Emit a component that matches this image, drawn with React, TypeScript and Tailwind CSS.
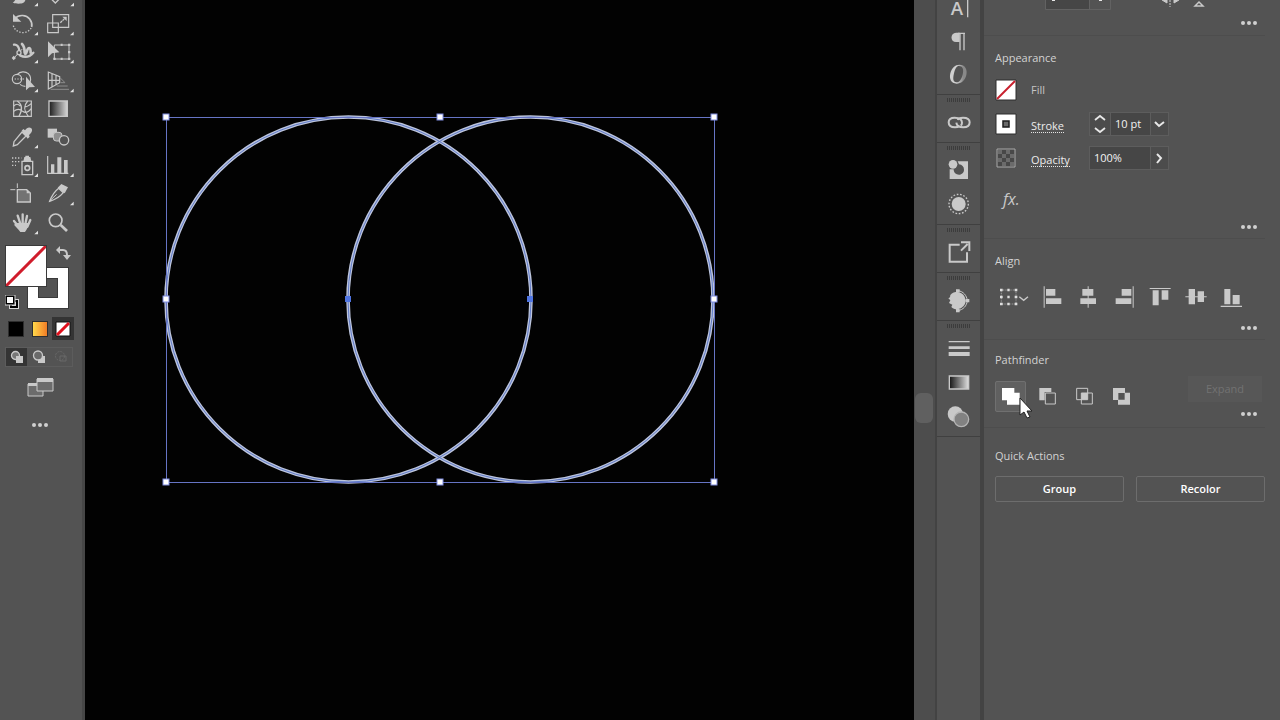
import type { ReactNode } from 'react';

type Icon = { label: string; box: string; art: ReactNode };

const INK = '#c9c9c9';

/* The small triangle that marks a tool with hidden variants */
function Corner({ x, y }: { x: number; y: number }) {
  return <path d={`M${x} ${y - 11}v11h-11z`} fill="#e2e2e2" />;
}

const tools: Icon[] = [
  {
    label: 'Paintbrush',
    box: '12 -56 108 84',
    art: (
      <>
        <path d="M38 8C46 6 44-4 56-6l14-8 6 14c0 8-8 12-20 12-8 0-14 0-18-4z" fill={INK} />
        <Corner x={114} y={20} />
      </>
    ),
  },
  {
    label: 'Eraser',
    box: '120 -56 108 84',
    art: (
      <>
        <path d="M150-6l16 16 17-17-15-15z" fill="none" stroke={INK} strokeWidth="4" />
        <Corner x={222} y={20} />
      </>
    ),
  },
  {
    label: 'Rotate',
    box: '12 29 108 84',
    art: (
      <>
        <path d="M45 54c12-12 34-11 44 2 6 8 8 16 6 24" fill="none" stroke={INK} strokeWidth="5" />
        <path d="M39 41v23h25z" fill={INK} />
        <path d="M40 76c3 12 14 20 28 21 12 0 22-7 26-15" fill="none" stroke={INK} strokeWidth="4" strokeDasharray="4 5" />
        <Corner x={114} y={105} />
      </>
    ),
  },
  {
    label: 'Scale',
    box: '120 29 108 84',
    art: (
      <>
        <g fill="none" stroke={INK} strokeWidth="3.5">
          <path d="M158 43h48v38h-48z" />
          <path d="M143 68h32v29h-32z" />
          <path d="M181 67l15-14" strokeWidth="4" strokeDasharray="7 2" />
        </g>
        <path d="M187 49h13v13z" fill={INK} />
        <Corner x={221} y={105} />
      </>
    ),
  },
  {
    label: 'Width',
    box: '12 114 108 84',
    art: (
      <>
        <g fill="none" stroke={INK} strokeLinecap="round">
          <path d="M42 134c8-2 14 6 16 16" strokeWidth="7" />
          <path d="M66 132c6 6 8 14 8 26" strokeWidth="8" />
          <path d="M76 162c6-4 4-18 12-18 4 0 4 6 4 14" strokeWidth="8" />
          <path d="M40 176L66 148" strokeWidth="3" />
          <path d="M60 166c12 6 28 6 40-8" strokeWidth="7" />
          <circle cx="57" cy="158" r="6" strokeWidth="4" fill="#535353" />
        </g>
        <path d="M41 167l7 7-7 7-6-7z" fill={INK} />
        <Corner x={114} y={190} />
      </>
    ),
  },
  {
    label: 'Free Transform',
    box: '120 114 108 84',
    art: (
      <>
        <path d="M163 135h44v42h-44z" fill="none" stroke={INK} strokeWidth="3" />
        <path d="M204 131h7v7h-7zM204 153h7v7h-7zM204 173h7v7h-7zM182 173h6v7h-6zM160 173h7v7h-7zM182 131h6v7h-6z" fill={INK} />
        <path d="M144 124v48l12-12 22-3z" fill={INK} />
        <Corner x={221} y={190} />
      </>
    ),
  },
  {
    label: 'Shape Builder',
    box: '12 200 108 84',
    art: (
      <>
        <g fill="none" stroke={INK} strokeWidth="3.5">
          <circle cx="51" cy="236" r="14" />
          <path d="M52 222c8-9 24-10 33-2 7 7 8 17 5 25M60 252c5 4 11 6 16 6" />
          <path d="M44 236h28" strokeDasharray="4 4" />
        </g>
        <path d="M78 229v41l10-9 17-1z" fill={INK} />
        <Corner x={114} y={276} />
      </>
    ),
  },
  {
    label: 'Perspective Grid',
    box: '120 200 108 84',
    art: (
      <>
        <path d="M145 215v51l34-19v-18zM156 221v40M168 226v28M145 240h34" fill="none" stroke={INK} strokeWidth="3.5" />
        <path d="M180 232l14 14M182 247h13M170 257h33M152 267h55" stroke="#8d8d8d" strokeWidth="3" />
        <Corner x={221} y={276} />
      </>
    ),
  },
  {
    label: 'Mesh',
    box: '12 285 108 84',
    art: (
      <g fill="none" stroke={INK} strokeWidth="3.5">
        <path d="M41 303h53v46H41z" />
        <path d="M52 303c18 12 14 30 5 46M83 303c-14 16-12 30 2 46M41 334c10-8 18-8 27 0 8 6 18 2 26-8M41 318c8-8 14-6 20 0M73 321c8 0 14-4 21-10" />
      </g>
    ),
  },
  {
    label: 'Gradient',
    box: '120 285 108 84',
    art: (
      <>
        <linearGradient id="tool-gradient">
          <stop stopColor="#1c1c1c" />
          <stop offset="1" stopColor="#d6d6d6" />
        </linearGradient>
        <path d="M147 303h55v46h-55z" fill="url(#tool-gradient)" stroke={INK} strokeWidth="4" />
      </>
    ),
  },
  {
    label: 'Eyedropper',
    box: '12 10 108 84',
    art: (
      <>
        <path d="M66 37l12 12-26 26-12 4 2-13z" fill="none" stroke={INK} strokeWidth="4" />
        <path d="M65 33l5-5 5 4c5-8 13-11 19-6 5 6 1 14-7 20l2 5-6 6z" fill={INK} />
        <Corner x={114} y={86} />
      </>
    ),
  },
  {
    label: 'Blend',
    box: '120 10 108 84',
    art: (
      <>
        <path d="M143 27h28v27h-28z" fill={INK} />
        <rect x="160" y="38" width="26" height="26" rx="9" fill="#8f8f8f" stroke={INK} strokeWidth="3" />
        <circle cx="192" cy="62" r="14" fill="#535353" stroke={INK} strokeWidth="4" />
      </>
    ),
  },
  {
    label: 'Symbol Sprayer',
    box: '12 96 108 84',
    art: (
      <>
        <path d="M66 124h32v40H66z" fill="none" stroke={INK} strokeWidth="4" />
        <path d="M70 124l3-13h18l3 13zM76 107h11v5H76z" fill={INK} />
        <circle cx="82" cy="144" r="7" fill="none" stroke={INK} strokeWidth="5" />
        <path d="M36 114h28M36 125h22M36 136h12" stroke={INK} strokeWidth="4" strokeDasharray="4 5" />
        <Corner x={114} y={171} />
      </>
    ),
  },
  {
    label: 'Column Graph',
    box: '120 96 108 84',
    art: (
      <>
        <path d="M143 108v52h62" fill="none" stroke={INK} strokeWidth="3.5" />
        <path d="M153 133h10v27h-10zM172 112h12v48h-12zM192 120h11v40h-11z" fill={INK} />
        <Corner x={221} y={171} />
      </>
    ),
  },
  {
    label: 'Artboard',
    box: '12 181 108 84',
    art: (
      <>
        <path d="M52 210h28l11 10v27H52z" fill="#737373" stroke={INK} strokeWidth="4" />
        <path d="M80 210v11h11" fill={INK} />
        <path d="M31 210h15M52 191v14" stroke={INK} strokeWidth="3" />
      </>
    ),
  },
  {
    label: 'Slice',
    box: '120 181 108 84',
    art: (
      <>
        <path d="M176 206l14 13c-10 12-24 21-41 26 6-16 14-29 27-39z" fill="none" stroke={INK} strokeWidth="4" />
        <path d="M173 204l11-11 20 10-10 18z" fill={INK} />
        <path d="M148 245l22-21" stroke={INK} strokeWidth="3" />
        <Corner x={221} y={257} />
      </>
    ),
  },
  {
    label: 'Hand',
    box: '12 266 108 84',
    art: (
      <>
        <g stroke={INK} strokeWidth="7" strokeLinecap="round" fill="none">
          <path d="M42 302l14 17M53 286l8 24M68 282v26M81 287l-5 24M91 299l-9 20" />
        </g>
        <path d="M50 308h37c-2 10-5 18-12 27H61c-6-9-13-15-19-22z" fill={INK} />
        <Corner x={114} y={342} />
      </>
    ),
  },
  {
    label: 'Zoom',
    box: '120 266 108 84',
    art: (
      <>
        <circle cx="167" cy="300" r="19" fill="none" stroke={INK} strokeWidth="5" />
        <path d="M182 314l19 18" stroke={INK} strokeWidth="8" />
      </>
    ),
  },
];

const dock: Icon[][] = [
  [
    {
      label: 'Character',
      box: '97 -33 126 102',
      art: (
        <>
          <text x="138" y="44" fontSize="56" fontWeight="600" fill={INK} fontFamily="Open Sans, sans-serif">A</text>
          <path d="M189 0v52" stroke={INK} strokeWidth="4" />
        </>
      ),
    },
    {
      label: 'Paragraph',
      box: '97 69 126 102',
      art: (
        <>
          <path d="M165 98v28h-11c-18 0-18-28 0-28z" fill={INK} />
          <path d="M160 100h21M166 98v53M178 98v53" stroke={INK} strokeWidth="4" fill="none" />
        </>
      ),
    },
    {
      label: 'OpenType',
      box: '97 171 126 102',
      art: (
        <>
          <linearGradient id="opentype">
            <stop offset=".4" stopColor="#d0d0d0" />
            <stop offset=".8" stopColor="#898989" />
          </linearGradient>
          <path
            d="M164 194c18 0 25 15 21 31-4 17-16 26-29 26-17 0-23-15-19-31 4-17 15-26 27-26zm-1 4c-7 0-12 8-15 22-4 16-3 27 7 27 9 0 15-8 19-23 4-16 0-26-11-26z"
            fill="url(#opentype)"
          />
        </>
      ),
    },
  ],
  [
    {
      label: 'Links',
      box: '97 315 126 102',
      art: (
        <g fill="none" stroke={INK} strokeWidth="6">
          <path d="M164 378c-3 3-8 4-13 4-11 0-19-5-19-15s8-14 18-14c11 0 22 4 22 15 0 4-1 7-4 9" />
          <path d="M159 360c2-5 8-7 16-7 12 0 20 5 20 14 0 10-8 15-19 15-10 0-20-4-21-14" />
        </g>
      ),
    },
  ],
  [
    {
      label: 'Color Guide',
      box: '97 41 126 102',
      art: (
        <>
          <path d="M159 66h31v53h-55V90h12c0 10 7 16 16 16 9 0 15-7 15-15 0-9-6-15-15-16z" fill={INK} />
          <circle cx="145" cy="75" r="13" fill={INK} />
        </>
      ),
    },
    {
      label: 'Appearance',
      box: '97 142 126 102',
      art: (
        <>
          <circle cx="162" cy="193" r="21" fill={INK} />
          <circle cx="162" cy="193" r="29" fill="none" stroke={INK} strokeWidth="4" strokeDasharray="5 5" />
        </>
      ),
    },
  ],
  [
    {
      label: 'Asset Export',
      box: '97 286 126 102',
      art: (
        <>
          <path d="M165 315h-30v51h52v-28" fill="none" stroke={INK} strokeWidth="6" />
          <path d="M169 333l20-20M169 308h25v26" fill="none" stroke={INK} strokeWidth="6" />
        </>
      ),
    },
  ],
  [
    {
      label: 'Color Themes',
      box: '97 12 126 102',
      art: (
        <>
          <path d="M137 48c7-8 18-11 28-9 13 3 20 14 20 26 0 14-10 25-23 26-9 1-17-1-22-7l3-7-10-5 4-8-6-6 5-3z" fill={INK} />
          <path d="M160 35c16 2 26 14 28 30-2 16-12 27-28 30" fill="none" stroke="#535353" strokeWidth="9" />
          <path d="M160 35c16 2 26 14 28 30-2 16-12 27-28 30" fill="none" stroke={INK} strokeWidth="3" />
          <path d="M154 31h11v10h-11zM183 60h11v10h-11zM154 90h11v10h-11z" fill={INK} />
        </>
      ),
    },
  ],
  [
    {
      label: 'Stroke panel',
      box: '97 155 126 102',
      art: <path d="M132 185h63v4h-63zM132 201h63v8h-63zM132 218h63v12h-63z" fill={INK} />,
    },
    {
      label: 'Gradient panel',
      box: '97 255 126 102',
      art: (
        <>
          <linearGradient id="dock-gradient">
            <stop stopColor="#141414" />
            <stop offset="1" stopColor="#e0e0e0" />
          </linearGradient>
          <path d="M134 288h58v39h-58z" fill="url(#dock-gradient)" stroke={INK} strokeWidth="4" />
        </>
      ),
    },
    {
      label: 'Transparency',
      box: '97 357 126 102',
      art: (
        <>
          <circle cx="152" cy="402" r="23" fill={INK} />
          <circle cx="170" cy="418" r="22" fill="#828282" stroke="#b5b5b5" strokeWidth="4" />
        </>
      ),
    },
  ],
];

const alignments: Icon[] = [
  {
    label: 'Horizontal Align Left',
    box: '164 117 108 108',
    art: <path d="M193 139h3v64h-3zM200 147h28v20h-28zM200 175h46v17h-46z" fill={INK} />,
  },
  {
    label: 'Horizontal Align Center',
    box: '272 117 108 108',
    art: <path d="M325 139h3v64h-3zM309 147h33v20h-33zM303 175h47v17h-47z" fill={INK} />,
  },
  {
    label: 'Horizontal Align Right',
    box: '380 117 108 108',
    art: <path d="M460 139h3v64h-3zM427 147h29v20h-29zM409 175h47v17h-47z" fill={INK} />,
  },
  {
    label: 'Vertical Align Top',
    box: '487 117 108 108',
    art: <path d="M510 144h63v3h-63zM519 151h18v45h-18zM546 151h20v28h-20z" fill={INK} />,
  },
  {
    label: 'Vertical Align Center',
    box: '594 117 108 108',
    art: <path d="M616 169h64v3h-64zM626 147h19v46h-19zM653 154h19v32h-19z" fill={INK} />,
  },
  {
    label: 'Vertical Align Bottom',
    box: '702 117 108 108',
    art: <path d="M722 197h64v4h-64zM733 147h18v46h-18zM758 165h21v28h-21z" fill={INK} />,
  },
];

const pathfinders: Icon[] = [
  {
    label: 'Unite',
    box: '46 124 93 93',
    art: <path d="M67 145h37v14h16v36H82v-13H67z" fill="#ffffff" />,
  },
  {
    label: 'Minus Front',
    box: '156 124 93 93',
    art: (
      <>
        <path d="M178 145h36v12h-20v25h-16z" fill={INK} />
        <path d="M196 160h30v33h-30z" fill="none" stroke={INK} strokeWidth="3" />
      </>
    ),
  },
  {
    label: 'Intersect',
    box: '267 124 93 93',
    art: (
      <>
        <path d="M290 146h33v34h-33zM304 160h33v33h-33z" fill="none" stroke={INK} strokeWidth="3" />
        <path d="M304 160h19v20h-19z" fill={INK} />
      </>
    ),
  },
  {
    label: 'Exclude',
    box: '378 124 93 93',
    art: <path fillRule="evenodd" d="M399 145h36v14h15v36h-36v-14h-15zM415 160v20h19v-20z" fill={INK} />,
  },
];

function More() {
  return (
    <button aria-label="More options" className="mr-2 flex h-2 w-4 items-center justify-between">
      <Dots />
    </button>
  );
}

function Dots() {
  return (
    <svg viewBox="0 0 16 8" className="h-2 w-4" fill="#d0d0d0">
      <circle cx="2" cy="4" r="2" />
      <circle cx="8" cy="4" r="2" />
      <circle cx="14" cy="4" r="2" />
    </svg>
  );
}

function Toolbar() {
  return (
    <aside className="flex w-[85px] shrink-0 flex-col border-r-3 border-[#474747]">
      <div className="-mt-[19px] ml-1 grid h-[256px] w-[72px] shrink-0 grid-cols-2">
        {tools.map((tool) => (
          <button key={tool.label} aria-label={tool.label} className="flex items-center justify-center">
            <svg viewBox={tool.box} className="h-7 w-9">
              {tool.art}
            </svg>
          </button>
        ))}
      </div>

      {/* Fill and stroke proxies overlap each other */}
      <div className="relative mt-2 ml-[5px] h-16 w-16">
        <button aria-label="Stroke color" className="absolute right-0 bottom-0 size-[42px] border border-[#3a3a3a] bg-white p-[10px]">
          <span className="block size-5 border border-[#3a3a3a] bg-[#535353]" />
        </button>
        <button aria-label="Fill color" className="absolute top-0 left-0 size-[42px] border border-[#3a3a3a] bg-white">
          <svg viewBox="0 0 40 40" className="size-10">
            <path d="M0 40L40 0" stroke="#d01c2b" strokeWidth="3" />
          </svg>
        </button>
        <button aria-label="Swap fill and stroke" className="absolute top-0 right-0">
          <svg viewBox="0 0 16 16" className="-mr-[2px] size-4">
            <path d="M4 5h4c3 0 4 2 4 5" fill="none" stroke={INK} strokeWidth="2" />
            <path d="M5 1v8L1 5zM8 10h8l-4 5z" fill={INK} />
          </svg>
        </button>
        <button aria-label="Default colors" className="absolute bottom-0 left-0">
          <svg viewBox="0 0 14 14" className="size-[14px]">
            <path d="M6 6h6v6H6z" fill="none" stroke="#d8d8d8" strokeWidth="4" />
            <path d="M6 6h6v6H6z" fill="none" stroke="#000000" strokeWidth="2" />
            <path d="M1 1h8v8H1z" fill="#ffffff" stroke="#000000" strokeWidth="2" />
            <path d="M0 0h10v10H0z" fill="none" stroke="#d8d8d8" />
          </svg>
        </button>
      </div>

      <div className="mt-2 ml-1 flex h-[23px] items-center">
        <button aria-label="Color" className="flex w-6 justify-center">
          <span className="size-4 border border-[#2e2e2e] bg-black" />
        </button>
        <button aria-label="Gradient fill" className="flex w-6 justify-center">
          <span className="size-4 border border-[#2e2e2e] bg-linear-to-r from-[#ffd84a] to-[#f07c26]" />
        </button>
        <button aria-label="None" className="flex h-[23px] w-[22px] items-center justify-center bg-[#343434]">
          <svg viewBox="0 0 16 16" className="size-4">
            <path d="M1 1h14v14H1z" fill="#ffffff" stroke="#111111" />
            <path d="M2 14L14 2" stroke="#e0101c" strokeWidth="3" />
          </svg>
        </button>
      </div>

      <div className="mt-[7px] ml-[5px] flex h-5 w-[68px] border border-[#5c5c5c]">
        <button aria-label="Draw Normal" className="flex w-[21px] items-center justify-center bg-[#343434]">
          <svg viewBox="0 0 14 14" className="size-[14px]">
            <circle cx="5.5" cy="5.5" r="4" fill="#777777" stroke={INK} strokeWidth="1.3" />
            <path d="M6 6h7v7H6z" fill={INK} />
          </svg>
        </button>
        <button aria-label="Draw Behind" className="flex w-6 items-center justify-center">
          <svg viewBox="0 0 14 14" className="size-[14px]">
            <path d="M6 6h7v7H6z" fill={INK} />
            <circle cx="6" cy="5.5" r="4.5" fill="#6a6a6a" stroke={INK} strokeWidth="1.3" />
          </svg>
        </button>
        <button aria-label="Draw Inside" disabled className="flex w-5 items-center justify-center">
          <svg viewBox="0 0 14 14" className="size-[14px]" fill="none" stroke="#686868">
            <circle cx="6" cy="6" r="4.5" strokeDasharray="2 1" />
            <path d="M6 6h6v5H6z" />
          </svg>
        </button>
      </div>

      <button aria-label="Change Screen Mode" className="mt-[11px] ml-[27px] w-[27px]">
        <svg viewBox="0 0 27 20" className="h-5 w-[27px]">
          <path d="M1 6h15v12H1z" fill="#6c6c6c" stroke={INK} />
          <path d="M1 5h15v3H1z" fill={INK} />
          <path d="M10 1h16v12H10z" fill="#6c6c6c" stroke={INK} />
          <path d="M10 0h16v4H10z" fill={INK} />
        </svg>
      </button>
      <button aria-label="Edit Toolbar" className="mt-[23px] ml-8 w-4">
        <Dots />
      </button>
    </aside>
  );
}

/* Selection handles sit on the bounding box of both circles */
const handles = [
  [81, 117],
  [355, 117],
  [629, 117],
  [81, 299],
  [629, 299],
  [81, 482],
  [355, 482],
  [629, 482],
];

function Artboard() {
  return (
    <main className="min-w-0 flex-1 overflow-hidden bg-[#020202]">
      <svg className="h-full w-full" fill="none">
        <g stroke="#bcc4dc" strokeWidth="3.6">
          <circle cx="263.5" cy="299.5" r="182.5" />
          <circle cx="445.5" cy="299.5" r="182.5" />
        </g>
        <g stroke="#5f7ac8" strokeWidth="1">
          <circle cx="263.5" cy="299.5" r="182.5" />
          <circle cx="445.5" cy="299.5" r="182.5" />
        </g>
        <path d="M81.5 117.5h548v365h-548z" stroke="#6674c4" />
        <path d="M260 296h6v6h-6zM442 296h6v6h-6z" fill="#4f74e0" />
        {handles.map(([x, y]) => (
          <rect key={`${x}-${y}`} x={x - 3} y={y - 3} width="6" height="6" fill="#ffffff" stroke="#7f8ce0" />
        ))}
      </svg>
    </main>
  );
}

function Dock() {
  return (
    <nav className="flex w-[49px] shrink-0 flex-col border-r-4 border-l-2 border-[#434343]">
      {dock.map((group, index) => (
        <div key={group[0].label} className={index === 0 ? '-mt-[11px] pb-[3px]' : 'border-t border-[#404040] pb-[3px]'}>
          {index > 0 && (
            <div className="flex h-[10px] items-center justify-center">
              <span className="h-1 w-6 bg-[repeating-linear-gradient(90deg,#3c3c3c_0_1px,#535353_1px_2px)]" />
            </div>
          )}
          {group.map((icon) => (
            <button key={icon.label} aria-label={icon.label} className="block">
              <svg viewBox={icon.box} className="h-[34px] w-[42px]">
                {icon.art}
              </svg>
            </button>
          ))}
        </div>
      ))}
      <div className="border-t border-[#404040]" />
    </nav>
  );
}

function Swatch({ kind }: { kind: 'none' | 'stroke' | 'opacity' }) {
  return (
    <svg viewBox="0 0 22 22" className="size-[22px]">
      {kind === 'none' && (
        <>
          <path d="M1 1h20v20H1z" fill="#ffffff" stroke="#2c2c2c" />
          <path d="M2 20L20 2" stroke="#c8202e" strokeWidth="2" />
        </>
      )}
      {kind === 'stroke' && (
        <>
          <path d="M1 1h20v20H1z" fill="#ffffff" stroke="#2c2c2c" />
          <path d="M8 8h6v6H8z" fill="#6a6a6a" stroke="#1c1c1c" strokeWidth="1.5" />
        </>
      )}
      {kind === 'opacity' && (
        <>
          <path d="M2 2h18v18H2z" fill="#484848" stroke="#a9a9a9" />
          <path d="M3 3h4v4H3zM11 3h4v4h-4zM7 7h4v4H7zM15 7h4v4h-4zM3 11h4v4H3zM11 11h4v4h-4zM7 15h4v4H7zM15 15h4v4h-4z" fill="#6b6b6b" />
        </>
      )}
    </svg>
  );
}

function Heading({ children }: { children: ReactNode }) {
  return <h2 className="text-[11px] leading-4 font-medium text-[#d2d2d2]">{children}</h2>;
}

function Properties() {
  return (
    <aside className="flex w-[296px] shrink-0 flex-col pr-[15px]">
      <section className="h-[35px] pl-[11px]">
        <div className="flex h-[19px] items-start">
          <svg viewBox="0 0 66 10" className="ml-[50px] h-[10px] w-[66px]">
            <path d="M1 0h43v9H1z" fill="#464646" />
            <path d="M.5 0v9.500h65V0M44.500 0v9" fill="none" stroke="#626262" />
            <path d="M7 0h3v1H7zM54 0h3v1h-3z" fill="#e8e8e8" />
          </svg>
          <svg viewBox="0 0 46 8" className="ml-[50px] h-2 w-[46px]">
            <path d="M1 0l5 3v-3M18 0l-5 3v-3" fill={INK} stroke={INK} />
            <path d="M9 0v7" stroke={INK} strokeDasharray="2 1" />
            <path d="M34 6l4-4 4 4z" fill="none" stroke={INK} strokeWidth="1.5" />
          </svg>
        </div>
        <div className="flex justify-end">
          <More />
        </div>
      </section>

      <section className="border-t border-[#4d4d4d] pt-[14px] pb-[7px] pl-[11px]">
        <Heading>Appearance</Heading>
        <div className="mt-[7px] flex h-[34px] items-center">
          <button aria-label="Fill swatch">
            <Swatch kind="none" />
          </button>
          <span className="ml-[14px] text-[11px] font-medium text-[#c4c4c4]">Fill</span>
        </div>
        <div className="flex h-[34px] items-center">
          <button aria-label="Stroke swatch">
            <Swatch kind="stroke" />
          </button>
          <div className="ml-[14px] w-[58px]">
            <label htmlFor="stroke" className="inline-block border-b border-dotted border-[#e4e4e4] text-[11px] leading-[13px] font-medium text-[#ececec]">
              Stroke
            </label>
          </div>
          <div className="flex h-6 w-20 border border-[#5d5d5d]">
            <button aria-label="Step stroke weight" className="w-[21px] border-r border-[#5d5d5d] bg-[#4c4c4c]">
              <svg viewBox="0 0 20 22" className="h-[22px] w-5" fill="none" stroke="#e8e8e8" strokeWidth="1.8">
                <path d="M5 7l5-4 5 4M5 15l5 4 5-4" />
              </svg>
            </button>
            <input id="stroke" defaultValue="10 pt" className="w-[39px] bg-[#464646] pl-1 text-[11px] font-medium text-[#f2f2f2] outline-none" />
            <button aria-label="Stroke weight presets" className="w-[18px] border-l border-[#5d5d5d] bg-[#4c4c4c]">
              <svg viewBox="0 0 17 22" className="h-[22px] w-[17px]" fill="none" stroke="#e8e8e8" strokeWidth="2">
                <path d="M4 9l4 4 5-4" />
              </svg>
            </button>
          </div>
        </div>
        <div className="flex h-[34px] items-center">
          <button aria-label="Opacity swatch">
            <Swatch kind="opacity" />
          </button>
          <div className="ml-[14px] w-[58px]">
            <label htmlFor="opacity" className="inline-block border-b border-dotted border-[#e4e4e4] text-[11px] leading-[13px] font-medium text-[#ececec]">
              Opacity
            </label>
          </div>
          <div className="flex h-6 w-20 border border-[#5d5d5d]">
            <input id="opacity" defaultValue="100%" className="w-[60px] bg-[#464646] pl-1 text-[11px] font-medium text-[#f2f2f2] outline-none" />
            <button aria-label="Opacity slider" className="w-[18px] border-l border-[#5d5d5d] bg-[#4c4c4c]">
              <svg viewBox="0 0 17 22" className="h-[22px] w-[17px]" fill="none" stroke="#e8e8e8" strokeWidth="2">
                <path d="M6 7l4 4-4 5" />
              </svg>
            </button>
          </div>
        </div>
        <div className="flex h-12 items-center">
          <button className="ml-2 text-base text-[#c9c9c9] italic">fx.</button>
        </div>
        <div className="flex justify-end">
          <More />
        </div>
      </section>

      <section className="border-t border-[#4d4d4d] pt-[14px] pb-[7px] pl-[11px]">
        <Heading>Align</Heading>
        <div className="mt-[10px] flex h-9 items-center">
          <button aria-label="Align To" className="w-[39px]">
            <svg viewBox="45 117 117 108" className="h-9 w-[39px]">
              <path d="M64 150h44v42H64z" fill="none" stroke="#a4a4a4" strokeWidth="2.5" strokeDasharray="3 2" />
              <g fill="#dedede">
                <path d="M60 146h8v8h-8zM82 146h7v8h-7zM104 146h8v8h-8zM60 167h8v8h-8zM82 167h7v8h-7zM104 167h8v8h-8zM60 188h8v8h-8zM82 188h7v8h-7zM104 188h8v8h-8z" />
              </g>
              <path d="M118 170l13 11 13-11" fill="none" stroke={INK} strokeWidth="4" />
            </svg>
          </button>
          {alignments.map((icon) => (
            <button key={icon.label} aria-label={icon.label}>
              <svg viewBox={icon.box} className="size-9">
                {icon.art}
              </svg>
            </button>
          ))}
        </div>
        <div className="mt-[9px] flex justify-end">
          <More />
        </div>
      </section>

      <section className="border-t border-[#4d4d4d] pt-3 pb-[9px] pl-[11px]">
        <Heading>Pathfinder</Heading>
        <div className="mt-2 flex items-start justify-between">
          <div className="flex gap-[6px] pt-[5px]">
            {pathfinders.map((icon, index) => (
              <div key={icon.label} className="relative">
                <button
                  aria-label={icon.label}
                  className={
                    index === 0
                      ? 'block rounded-xs bg-[#606060] outline outline-1 -outline-offset-1 outline-[#707070]'
                      : 'block'
                  }
                >
                  <svg viewBox={icon.box} className="size-[31px]">
                    {icon.art}
                  </svg>
                </button>
                {index === 0 && (
                  <svg viewBox="0 0 14 22" className="pointer-events-none absolute top-4 left-6 z-10 h-[22px] w-[14px]">
                    <path d="M1 1v17l4-3 3 6 3-1-3-6h5z" fill="#ffffff" stroke="#222222" strokeWidth="1" />
                  </svg>
                )}
              </div>
            ))}
          </div>
          <div className="flex flex-col items-end gap-2">
            <button disabled className="mr-[3px] h-[26px] w-[74px] bg-[#575757] text-[11px] font-medium text-[#727272]">
              Expand
            </button>
            <More />
          </div>
        </div>
      </section>

      <section className="border-t border-[#4d4d4d] pt-5 pl-[11px]">
        <Heading>Quick Actions</Heading>
        <div className="mt-3 grid grid-cols-2 gap-3">
          <button className="h-[26px] rounded-xs border border-[#6d6d6d] text-[11px] font-semibold text-white">Group</button>
          <button className="h-[26px] rounded-xs border border-[#6d6d6d] text-[11px] font-semibold text-white">Recolor</button>
        </div>
      </section>
    </aside>
  );
}

export default function App() {
  return (
    <div className="flex h-screen overflow-hidden bg-[#535353] font-['Open_Sans','Noto_Sans',sans-serif]">
      <Toolbar />
      <Artboard />
      {/* Vertical scrollbar of the document window */}
      <div className="flex w-[21px] shrink-0 flex-col bg-[#4d4d4d]">
        <div className="mt-[393px] ml-px h-[30px] w-[18px] rounded-md bg-[#606060]" />
      </div>
      <Dock />
      <Properties />
    </div>
  );
}
